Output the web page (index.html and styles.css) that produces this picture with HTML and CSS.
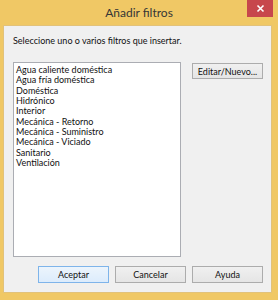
FILE: index.html
```html
<!DOCTYPE html>
<html lang="es">
<head>
    <meta charset="UTF-8">
    <title>Añadir filtros</title>
    <link rel="stylesheet" href="styles.css">
</head>
<body>
    <div class="window">
        <div class="titlebar">
            <div class="title">Añadir filtros</div>
            <button class="close" title="Cerrar">
                <svg width="9" height="9" viewBox="0 0 9 9">
                    <path d="M1.5 1.5 L7.5 7.5 M7.5 1.5 L1.5 7.5" stroke="#fff" stroke-width="1.6" fill="none"/>
                </svg>
            </button>
        </div>

        <div class="client">
            <p class="prompt">Seleccione uno o varios filtros que insertar.</p>

            <div class="list-row">
                <ul class="listbox">
                    <li>Agua caliente doméstica</li>
                    <li>Agua fría doméstica</li>
                    <li>Doméstica</li>
                    <li>Hidrónico</li>
                    <li>Interior</li>
                    <li>Mecánica - Retorno</li>
                    <li>Mecánica - Suministro</li>
                    <li>Mecánica - Viciado</li>
                    <li>Sanitario</li>
                    <li>Ventilación</li>
                </ul>
                <button class="btn edit">Editar/Nuevo...</button>
            </div>

            <div class="actions">
                <button class="btn default">Aceptar</button>
                <button class="btn">Cancelar</button>
                <button class="btn">Ayuda</button>
            </div>
        </div>
    </div>
</body>
</html>
```

FILE: styles.css
```css
body {
    margin: 0;
    background-color: #f0c865;
    font-family: Lato, "Noto Sans", Arial, sans-serif;
    color: #111;
    width: 278px;
    height: 300px;
    overflow: hidden;
}
.window {
    height: 300px;
    display: flex;
    flex-direction: column;
}
.titlebar {
    height: 25px;
    flex: none;
    display: grid;
    grid-template-columns: 1fr auto 1fr;
    align-items: start;
}
.titlebar .title {
    grid-column: 2;
    font-size: 12px;
    line-height: 16px;
    padding-top: 5px;
    color: #363636;
}
.titlebar .close {
    grid-column: 3;
    justify-self: end;
    width: 26px;
    height: 17px;
    margin: 0 5px 0 0;
    padding: 0;
    border: none;
    background-color: #c7474c;
    display: flex;
    align-items: center;
    justify-content: center;
}
.client {
    flex: 1;
    margin: 0 6px 7px 3px;
    padding: 0 8px 0 9px;
    background-color: #f0f0f0;
    border: 1px solid #e2c27a;
    box-sizing: border-box;
    display: flex;
    flex-direction: column;
}
.prompt {
    margin: 9px 0 0 0;
    font-size: 9px;
    line-height: 11px;
}
.list-row {
    display: flex;
    align-items: flex-start;
    gap: 11px;
    margin-top: 16px;
}
.listbox {
    list-style: none;
    margin: 0;
    padding: 2px 2px;
    width: 168px;
    height: 195px;
    box-sizing: border-box;
    background-color: #fff;
    border: 1px solid #abadb3;
    font-size: 9px;
    line-height: 10.35px;
}
.btn {
    width: 71px;
    height: 17px;
    padding: 0;
    box-sizing: border-box;
    border: 1px solid #acacac;
    background: linear-gradient(#f0f0f0, #e5e5e5);
    font-family: Lato, "Noto Sans", Arial, sans-serif;
    font-size: 9px;
    color: #111;
}
.btn.edit {
    height: 16px;
    margin-top: 1px;
}
.btn.default {
    border-color: #7eb4ea;
    background: linear-gradient(#ecf4fc, #dcecfc);
}
.actions {
    display: flex;
    justify-content: flex-end;
    gap: 6px;
    margin-top: 9px;
}
```
